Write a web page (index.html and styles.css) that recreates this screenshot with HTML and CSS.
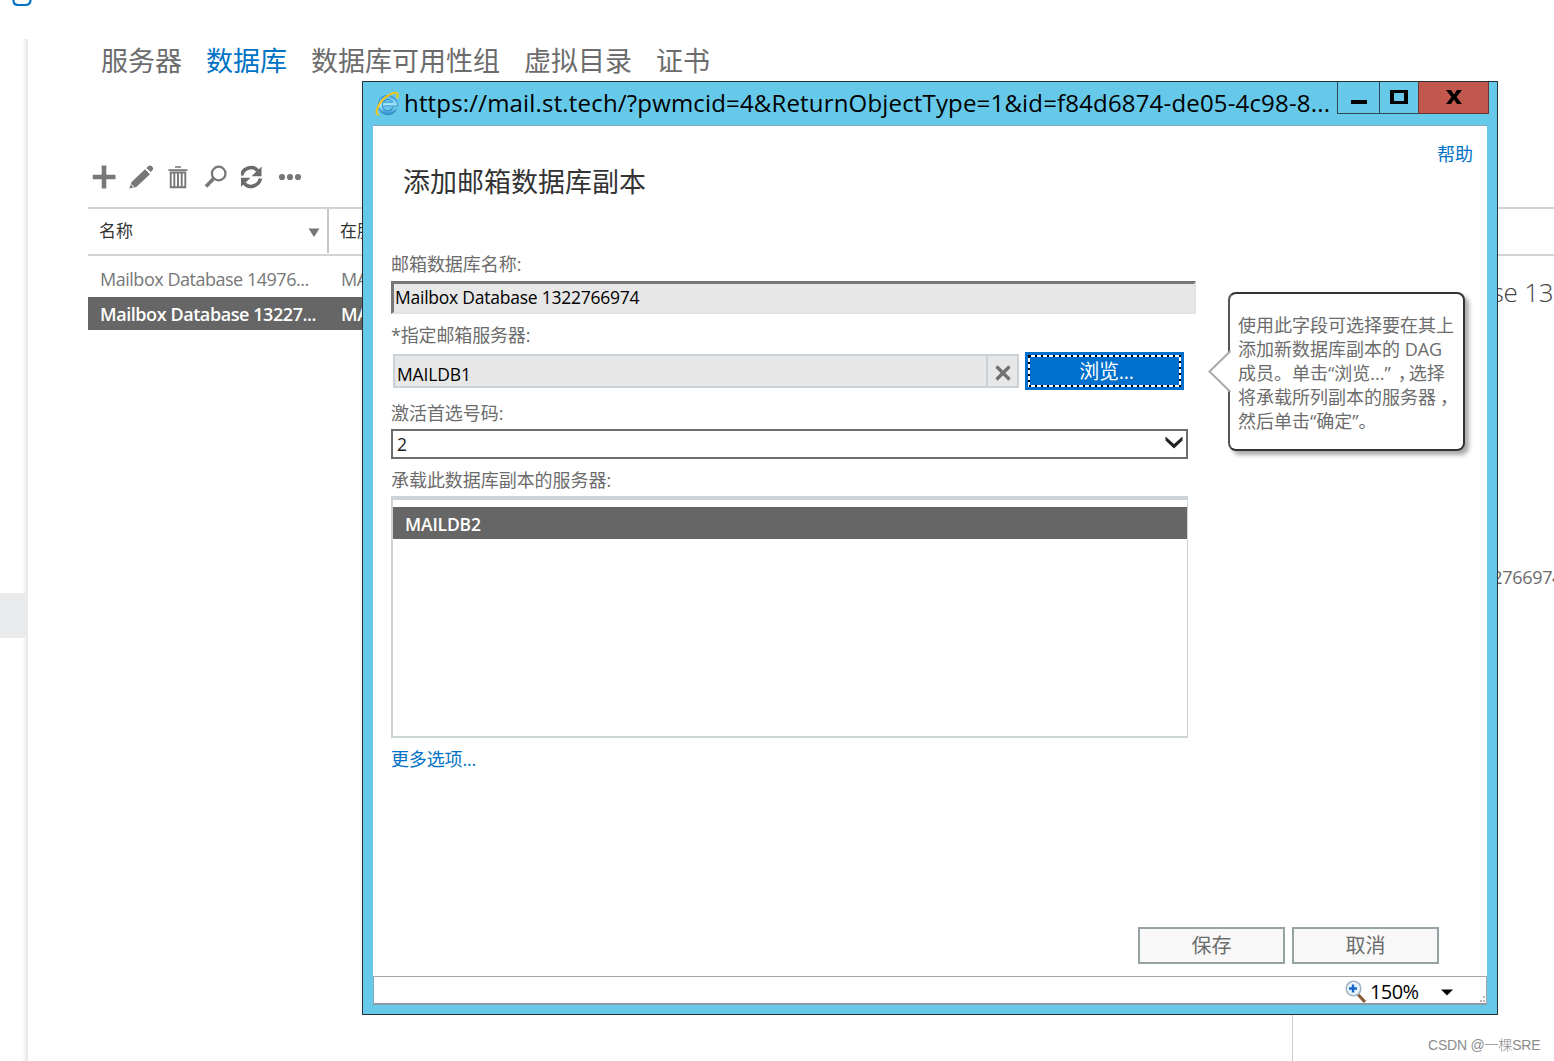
FILE: index.html
```
<!DOCTYPE html>
<html lang="zh-CN">
<head>
<meta charset="utf-8">
<title>添加邮箱数据库副本</title>
<link rel="stylesheet" href="styles.css">
</head>
<body>
<div class="page">
  <div class="sidebar">
    <svg class="logo" width="22" height="8" viewBox="0 0 22 8"><path d="M1.5-4V0.500Q1.500 5 6 5H13Q18.500 5 18.500 0V-4" fill="none" stroke="#0072c6" stroke-width="2.200"/></svg>
    <div class="nav"><div class="nav-current"></div></div>
  </div>
  <div class="main">
    <div class="tabs">
      <span>服务器</span><span class="active">数据库</span><span>数据库可用性组</span><span>虚拟目录</span><span>证书</span>
    </div>
    <div class="toolbar">
      <svg width="24" height="24" viewBox="0 0 24 24"><path d="M12 .5v23M.8 12h22.700" stroke="#777" stroke-width="4.600"/></svg>
      <svg width="24" height="24" viewBox="0 0 24 24"><path d="M.3 23.600L2.600 17 16 4.300l5 5L7.300 22zM17.300 3L19.500.9q1.800-1.200 3.600.7t.5 3.500L21.800 7z" fill="#777"/><path d="M2 19.500l3 2.600" stroke="#fff" stroke-width="1"/></svg>
      <svg width="24" height="24" viewBox="0 0 24 24"><path d="M9 2h6M2.500 5.200h19" stroke="#777" stroke-width="1.700"/><path d="M4.700 7v15.200h14.600V7M8.300 8.500V22M12 8.500V22M15.700 8.500V22M4 7.500h16" fill="none" stroke="#777" stroke-width="1.900"/></svg>
      <svg width="24" height="24" viewBox="0 0 24 24"><circle cx="14.700" cy="8.500" r="6.800" fill="none" stroke="#777" stroke-width="2.300"/><path d="M9.700 13.500L2 21.500" stroke="#777" stroke-width="3.600"/></svg>
      <svg width="24" height="24" viewBox="2 0 24 24"><path d="M2.600 10.500C4 3 14-.5 19 6" fill="none" stroke="#6b6b6b" stroke-width="3.600"/><path d="M22.500 1.500v9.700h-10l3.300-3.200 3-2.500z" fill="#6b6b6b"/><path d="M21.400 13.500C20 21 10 24.500 5 18" fill="none" stroke="#6b6b6b" stroke-width="3.600"/><path d="M1.500 22.500v-9.700h10l-3.300 3.200-3 2.500z" fill="#6b6b6b"/></svg>
      <svg width="24" height="24" viewBox="0 0 24 24"><circle cx="4" cy="12" r="3.100" fill="#777"/><circle cx="12" cy="12" r="3.100" fill="#777"/><circle cx="20" cy="12" r="3.100" fill="#777"/></svg>
    </div>
    <div class="list-head">
      <div class="col-name"><span>名称</span><svg width="12" height="10" viewBox="0 0 12 10"><path d="M.5.500h11L6 9z" fill="#777"/></svg></div>
      <div class="col-server">在服务器上处于活动状态</div>
    </div>
    <div class="split">
      <div class="list">
        <div class="row"><span class="cell-name">Mailbox Database 14976...</span><span>MAILDB1</span></div>
        <div class="row selected"><span class="cell-name">Mailbox Database 13227...</span><span>MAILDB2</span></div>
      </div>
      <div class="details">
        <div class="details-title">Mailbox Database 1322766974</div>
        <div class="details-copy">Mailbox Database 1322766974</div>
      </div>
    </div>
  </div>
</div>

<div class="window">
  <div class="titlebar">
    <svg class="ie" width="24" height="25" viewBox="0 0 24 25"><defs><linearGradient id="e" x2="0" y2="1"><stop offset="0" stop-color="#5eb8e8"/><stop offset=".5" stop-color="#a8ebff"/><stop offset="1" stop-color="#3b9bd8"/></linearGradient></defs><path d="M19.800 17A7.600 7.600 0 1 1 20.300 13H8" fill="none" stroke="#2b7fb8" stroke-width="4.600"/><path d="M19.800 17A7.600 7.600 0 1 1 20.300 13H8" fill="none" stroke="url(#e)" stroke-width="3.200"/><path d="M4 23.500C.2 24 .8 17.500 5.500 11.300S19.500.3 22 2.300q1.500 1.200 0 5" fill="none" stroke="#f5c518" stroke-width="2"/></svg>
    <div class="url">https://mail.st.tech/?pwmcid=4&amp;ReturnObjectType=1&amp;id=f84d6874-de05-4c98-8...</div>
    <div class="controls">
      <div class="ctl min"><i></i></div>
      <div class="ctl max"><i></i></div>
      <div class="ctl close"><svg width="16" height="14" viewBox="0 0 16 14"><path d="M0 0h5l3 4.500L11 0h5l-5.500 7 5.500 7h-5L8 9.500 5 14H0l5.500-7z" fill="#000"/></svg></div>
    </div>
  </div>
  <div class="client">
    <div class="dialog">
      <div class="dialog-head"><h1>添加邮箱数据库副本</h1><a class="help">帮助</a></div>
      <div class="form">
        <label class="label l1">邮箱数据库名称:</label>
        <div class="db-name">Mailbox Database 1322766974</div>
        <label class="label l2">*指定邮箱服务器:</label>
        <div class="picker">
          <div class="server">MAILDB1</div>
          <div class="clear"><svg width="16" height="16" viewBox="0 0 16 16"><path d="M1.500 1.500l13 13M14.500 1.500l-13 13" stroke="#707070" stroke-width="3.200"/></svg></div>
          <div class="browse"><svg class="focus" width="153" height="32"><rect x="1" y="1" width="151" height="30" fill="none" stroke="#fff" stroke-width="2"/><rect x="1" y="1" width="151" height="30" fill="none" stroke="#000" stroke-width="2" stroke-dasharray="2 4"/></svg><span>浏览...</span></div>
          <div class="tip">
            <svg class="arrow" width="24" height="46" viewBox="0 0 24 46"><path d="M23.500 2L2.500 22.500l21 20.500" fill="#fff" stroke="#aaa" stroke-width="2"/></svg>
            使用此字段可选择要在其上<br>添加新数据库副本的 DAG<br>成员。单击“浏览...”<span class="comma first">，</span>选择<br>将承载所列副本的服务器<span class="comma">，</span><br>然后单击“确定”。
          </div>
        </div>
        <label class="label l3">激活首选号码:</label>
        <div class="select"><span>2</span><svg width="18" height="13" viewBox="0 0 18 13"><path d="M.5.500v4L9 12.500l8.500-8v-4L9 8z" fill="#222"/></svg></div>
        <label class="label l4">承载此数据库副本的服务器:</label>
        <div class="hosts"><div class="host">MAILDB2</div></div>
        <a class="more">更多选项...</a>
      </div>
      <div class="actions"><div class="button">保存</div><div class="button">取消</div></div>
    </div>
    <div class="status">
      <svg width="22" height="24" viewBox="0 0 22 24"><path d="M13 14.500l7 7.500" stroke="#8a5a34" stroke-width="3.200"/><circle cx="8.500" cy="8.500" r="7.300" fill="#eaf4fd" stroke="#a3b4c6" stroke-width="1.600"/><path d="M8 4.500v8M4 8.500h8" stroke="#1464c8" stroke-width="2.400"/></svg>
      <span class="zoom">150%</span>
      <svg class="drop" width="12" height="7" viewBox="0 0 12 7"><path d="M0 .5h12L6 6.500z"/></svg>
      <svg class="grip" width="8" height="8" viewBox="0 0 8 8"><path d="M5 2h2v2H5zM2 6h2v2H2zM5 6h2v2H5z" fill="#b5b5b5"/></svg>
    </div>
  </div>
</div>
<div class="watermark">CSDN @一棵SRE</div>
</body>
</html>
```
FILE: styles.css
```
* { box-sizing: border-box; }
body {
  margin: 0; width: 1554px; height: 1061px; overflow: hidden; position: relative; background: #fff;
  font: 400 18px/24px "Open Sans", "Noto Sans CJK SC", sans-serif; color: #6c6c6c;
}
svg { display: block; flex: none; }
.page { display: flex; width: 1554px; height: 1061px; overflow: hidden; }
.sidebar { width: 28px; flex: none; display: flex; flex-direction: column; }
.logo { margin: 0 0 31px 12px; }
.nav { flex: 1; padding-top: 554px; background: linear-gradient(to right, #fff 22px, #e6e6e6 28px); }
.nav-current { height: 45px; background: #e9eaec; }
.main { width: 1466px; flex: none; margin-left: 60px; }
.tabs { display: flex; gap: 24px; height: 80px; padding: 43px 0 0 13px; font-size: 27px; line-height: 36px; white-space: nowrap; color: #6c6c6c; }
.tabs .active { color: #0072c6; }
.toolbar { display: flex; gap: 13.200px; padding: 85px 0 0 4px; height: 127px; }
.list-head { display: flex; height: 49px; border-top: 2px solid #cdd3d6; border-bottom: 2px solid #cdd3d6; color: #333; font-size: 17px; white-space: nowrap; }
.col-name { width: 241px; height: 44px; border-right: 2px solid #c8c8c8; display: flex; justify-content: space-between; padding: 10px 7px 0 11px; }
.col-name svg { margin-top: 9px; }
.col-server { padding: 10px 0 0 11px; }
.split { display: flex; height: 805px; }
.list { width: 1204px; flex: none; padding-top: 8px; }
.row { display: flex; height: 33px; line-height: 30px; padding-left: 12px; white-space: nowrap; letter-spacing: -.48px; color: #777; }
.cell-name { width: 241px; }
.row.selected { background: #666; color: #fff; font-weight: 600; line-height: 35px; letter-spacing: -.43px; }
.details { flex: 1; border-left: 1px solid #ccc; padding: 18px 0 0 20px; white-space: nowrap; overflow: hidden; }
.details-title { font-size: 26px; font-weight: 300; line-height: 36px; color: #444; letter-spacing: -.25px; }
.details-copy { margin-top: 255px; letter-spacing: -.33px; }

.window { position: absolute; left: 362px; top: 81px; width: 1136px; height: 934px; background: #66c9ea; border: 1px solid #2a2f33; padding: 0 8px 10px 10px; display: flex; flex-direction: column; }
.titlebar { display: flex; height: 43px; flex: none; }
.ie { margin: 9px 0 0 2px; }
.url { width: 938px; padding: 5px 0 0 5px; font-size: 24px; line-height: 32px; color: #000; white-space: nowrap; letter-spacing: .17px; flex: none; }
.controls { display: flex; height: 32px; flex: none; }
.ctl { border: 1px solid #2c4b57; border-top: 0; border-right: 0; display: flex; justify-content: center; }
.min { width: 42px; }
.max { width: 39px; }
.close { width: 71px; background: #c1574d; border-color: #663534; border-right: 1px solid #663534; padding-top: 8px; }
.min i { width: 16px; height: 4px; background: #000; margin-top: 18px; }
.max i { width: 18px; height: 14px; border: 3px solid #000; border-left-width: 4px; border-right-width: 4px; margin-top: 8px; }
.client { width: 1114px; height: 880px; border-top: 1px solid #86a7bd; background: #fff; display: flex; flex-direction: column; }
.dialog { height: 850px; padding: 0 14px 0 18px; display: flex; flex-direction: column; }
.dialog-head { display: flex; justify-content: space-between; height: 125px; padding: 16px 0 0 12px; }
h1 { margin: 20px 0 0; font-size: 27px; line-height: 40px; font-weight: 400; color: #333; }
.help, .more { color: #0072c6; }
.form { width: 805px; height: 676px; display: flex; flex-direction: column; }
.label { display: block; height: 24px; line-height: 23px; letter-spacing: -.05px; }
.l1 { margin-top: 2px; }
.db-name { height: 33px; margin-top: 4px; border: 3px solid #e2e2e2; border-top-color: #777; border-left-color: #777; border-width: 3px 2px 2px 3px; background: #e7e7e7; color: #000; line-height: 27px; padding-left: 1px; letter-spacing: -.24px; font-size: 17.500px; }
.l2 { margin-top: 10px; letter-spacing: -.15px; }
.picker { position: relative; display: flex; height: 38px; margin: 4px 0 0 2px; }
.server { width: 595px; height: 34px; margin-top: 2px; border: 2px solid #cad2d7; background: #e7e7e7; color: #000; padding: 6px 0 0 2px; font-size: 17.500px; letter-spacing: -.15px; }
.clear { width: 31px; height: 34px; margin-top: 2px; border: 2px solid #cad2d7; border-left: 0; background: #e7e7e7; padding: 9px 0 0 7px; }
.browse { position: relative; width: 159px; height: 38px; margin-left: 6px; background: #006fcd; color: #fff; font-size: 20px; line-height: 39px; text-align: center; padding-left: 4px; letter-spacing: -.3px; }
.focus { position: absolute; left: 3px; top: 3px; }
.tip { position: absolute; left: 835px; top: -60px; width: 237px; height: 159px; border: 2px solid #333; border-left-color: #555; border-radius: 8px; background: #fff; box-shadow: 4px 4px 4px #aaa; padding: 19px 0 0 8px; white-space: nowrap; }
.arrow { position: absolute; left: -23px; top: 55px; }
.comma { display: inline-block; width: 18px; text-indent: 4px; }
.comma.first { text-indent: 7px; }
.l3 { margin-top: 12px; }
.select { width: 797px; height: 30px; margin-top: 3px; border: 2px solid #6c6c6c; display: flex; justify-content: space-between; color: #222; line-height: 27px; padding: 0 3px 0 4px; font-size: 17.500px; }
.select svg { margin-top: 5px; }
.l4 { margin-top: 10px; }
.hosts { width: 797px; height: 242px; flex: none; margin-top: 3px; border: 2px solid #cdd4d7; border-top-width: 4px; border-right-width: 1px; padding-top: 7px; }
.host { height: 32px; background: #666; color: #fff; font-weight: 600; font-size: 17.500px; line-height: 34px; letter-spacing: -.15px; padding-left: 12px; }
.more { margin-top: 9px; letter-spacing: -.15px; }
.actions { display: flex; gap: 7px; padding-left: 747px; }
.button { width: 147px; height: 37px; border: 2px solid #95a3a5; background: #f8f8f8; font-size: 20px; line-height: 33px; text-align: center; }
.status { position: relative; display: flex; height: 29px; border: 1px solid #a6a6a6; border-bottom: 2px solid #8d9ba5; border-left-color: #86a7bd; padding: 3px 0 0 971px; }
.zoom { margin-left: 3px; width: 50px; color: #000; font-size: 20px; letter-spacing: -.6px; line-height: 23px; }
.drop { margin: 9px 0 0 21px; }
.grip { position: absolute; right: 0; bottom: 1px; }
.watermark { position: absolute; left: 1428px; top: 1033px; font-family: "Liberation Sans", "Noto Sans CJK SC", sans-serif; font-size: 14px; font-weight: 300; letter-spacing: -.2px; color: #8c8c8c; white-space: nowrap; }
```
